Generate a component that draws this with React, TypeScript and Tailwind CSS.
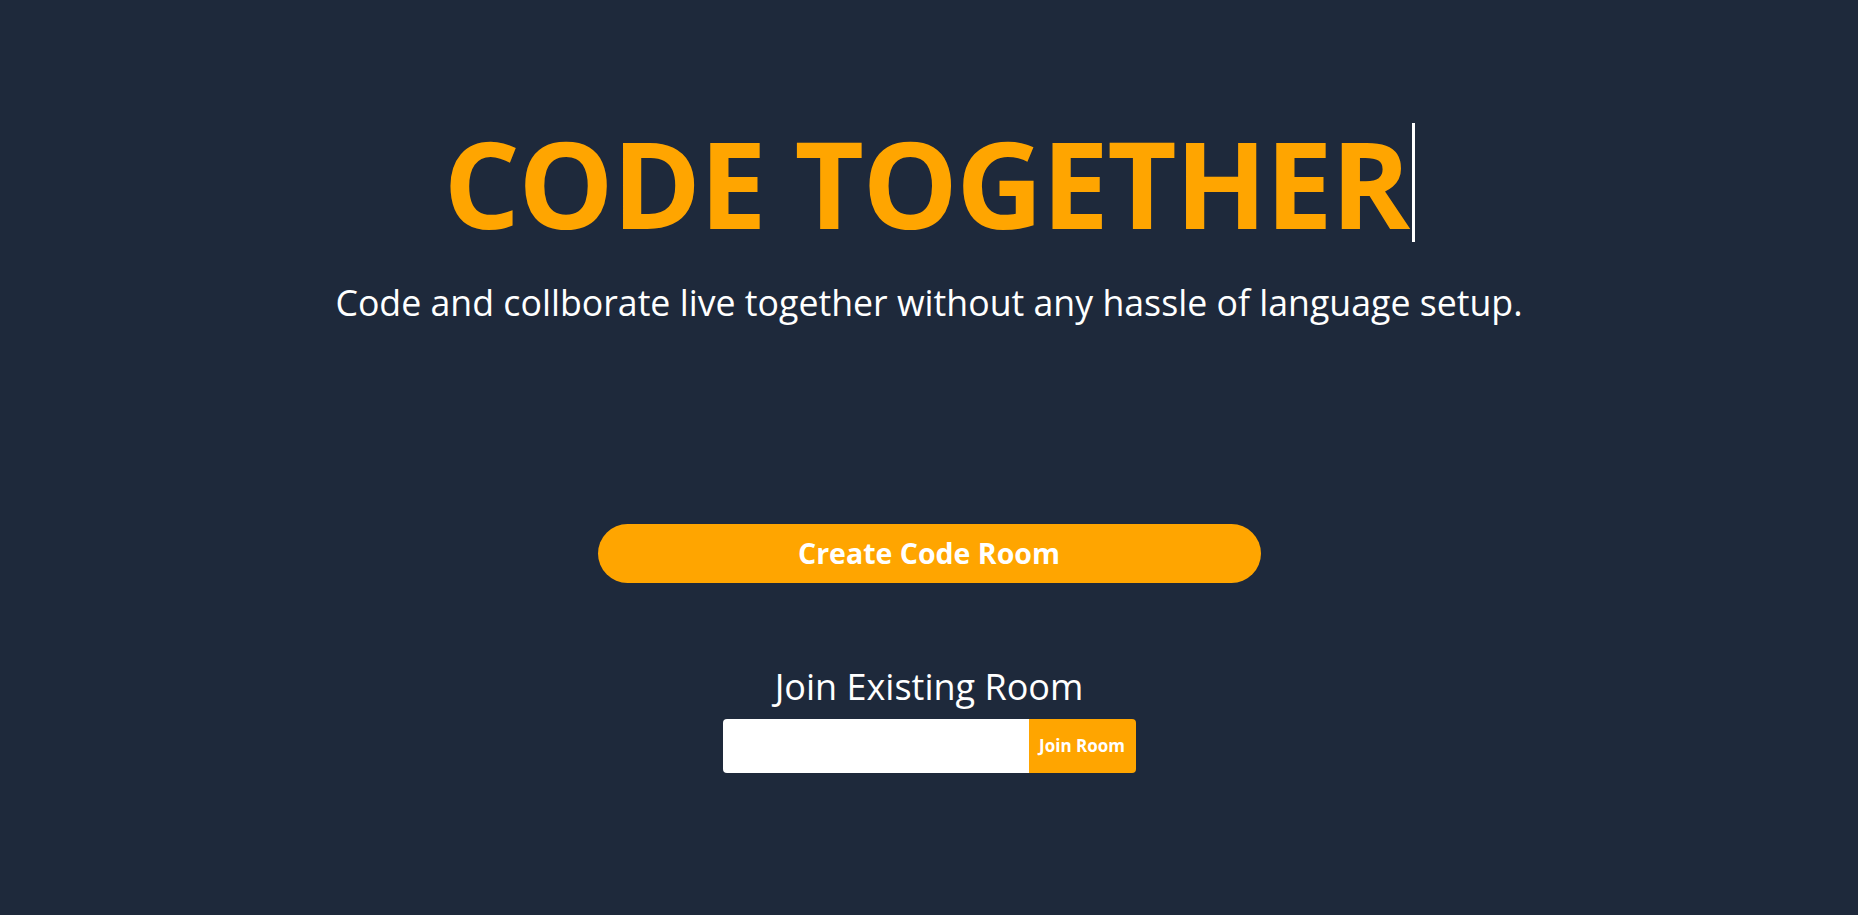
import React from "react";

export default function App() {
  return (
    <div
      className="min-h-screen w-full bg-[#1e293b] flex flex-col items-center"
      style={{ fontFamily: '"Open Sans", "Noto Sans", sans-serif' }}
    >
      <div className="mt-[123px] flex justify-center">
        <h1 className="inline-block border-r-[3px] border-white pr-[3px] text-[120px] leading-[119px] font-bold text-[#ffa500] tracking-[-1.6px]">
          CODE TOGETHER
        </h1>
      </div>
      <p className="mt-[38px] text-[35.7px] leading-[44px] text-white">
        Code and collborate live together without any hassle of language setup.
      </p>
      <button className="mt-[200px] w-[663px] h-[59px] rounded-full bg-[#ffa500] text-white font-bold text-[28.5px]">
        Create Code Room
      </button>
      <div className="mt-[82px] text-[36px] leading-[44px] text-white">Join Existing Room</div>
      <div className="mt-[10px] flex h-[54px] rounded-[4px] overflow-hidden">
        <input className="w-[306px] h-full bg-white outline-none px-3" />
        <button className="w-[107px] h-full bg-[#ffa500] text-white font-bold text-[17px]">
          Join Room
        </button>
      </div>
    </div>
  );
}
